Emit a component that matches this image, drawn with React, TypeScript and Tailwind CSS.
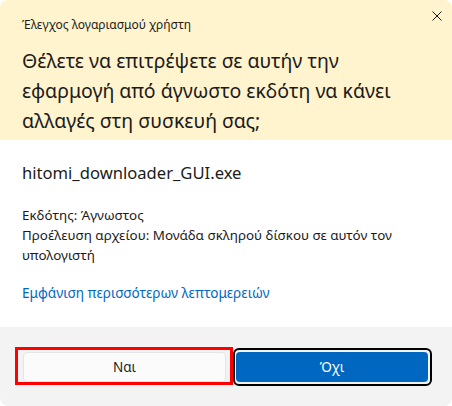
export default function App() {
  return (
    <div className="w-[452px] h-[406px] bg-white">
      <div
        className="w-full h-full flex flex-col rounded-lg overflow-hidden text-[#1b1b1b]"
        style={{ fontFamily: '"Noto Sans", "Open Sans", sans-serif' }}
      >
        {/* Header */}
        <div className="relative h-[140px] bg-[#fff4ce] px-[22px] pt-[16px] shrink-0">
          <div className="text-[12px] leading-[18px]">Έλεγχος λογαριασμού χρήστη</div>
          <button className="absolute top-[11px] right-[10px] w-[10px] h-[10px] flex items-center justify-center">
            <svg width="10" height="10" viewBox="0 0 10 10" fill="none" stroke="#1b1b1b" strokeWidth="1">
              <path d="M0.5 0.5 L9.5 9.5 M9.5 0.5 L0.5 9.5" />
            </svg>
          </button>
          <h1 className="mt-[12px] w-[400px] text-[19.5px] leading-[30px] font-normal">
            Θέλετε να επιτρέψετε σε αυτήν την εφαρμογή από άγνωστο εκδότη να κάνει αλλαγές στη συσκευή σας;
          </h1>
        </div>

        {/* Body */}
        <div className="flex-1 bg-white px-[22px] pt-[21px]">
          <div className="text-[16.6px] leading-[24px]">hitomi_downloader_GUI.exe</div>
          <div className="mt-[20px] text-[13.4px] leading-[20px]">
            <p>Εκδότης: Άγνωστος</p>
            <p>Προέλευση αρχείου: Μονάδα σκληρού δίσκου σε αυτόν τον υπολογιστή</p>
          </div>
          <a className="block mt-[18px] text-[13.6px] leading-[20px] text-[#0067c0]">
            Εμφάνιση περισσότερων λεπτομερειών
          </a>
        </div>

        {/* Footer */}
        <div className="h-[79px] shrink-0 bg-[#f3f3f3] flex items-start pt-[20px] pl-[15px]">
          <div className="w-[218px] h-[38px] border-[3px] border-[#ff0000] pl-[5px] pt-[2px]">
            <button className="w-[203px] h-[30px] rounded-[4px] border border-[#e5e5e5] bg-[#fbfbfb] text-[13.5px] text-[#1b1b1b]">
              Ναι
            </button>
          </div>
          <div className="mt-[1px] w-[199px] h-[38px] border-2 border-black rounded-[6px] pl-px pt-[2px]">
            <button className="w-[192px] h-[30px] rounded-[4px] bg-[#0067c0] text-[13.5px] text-white">
              Όχι
            </button>
          </div>
        </div>
      </div>
    </div>
  );
}
